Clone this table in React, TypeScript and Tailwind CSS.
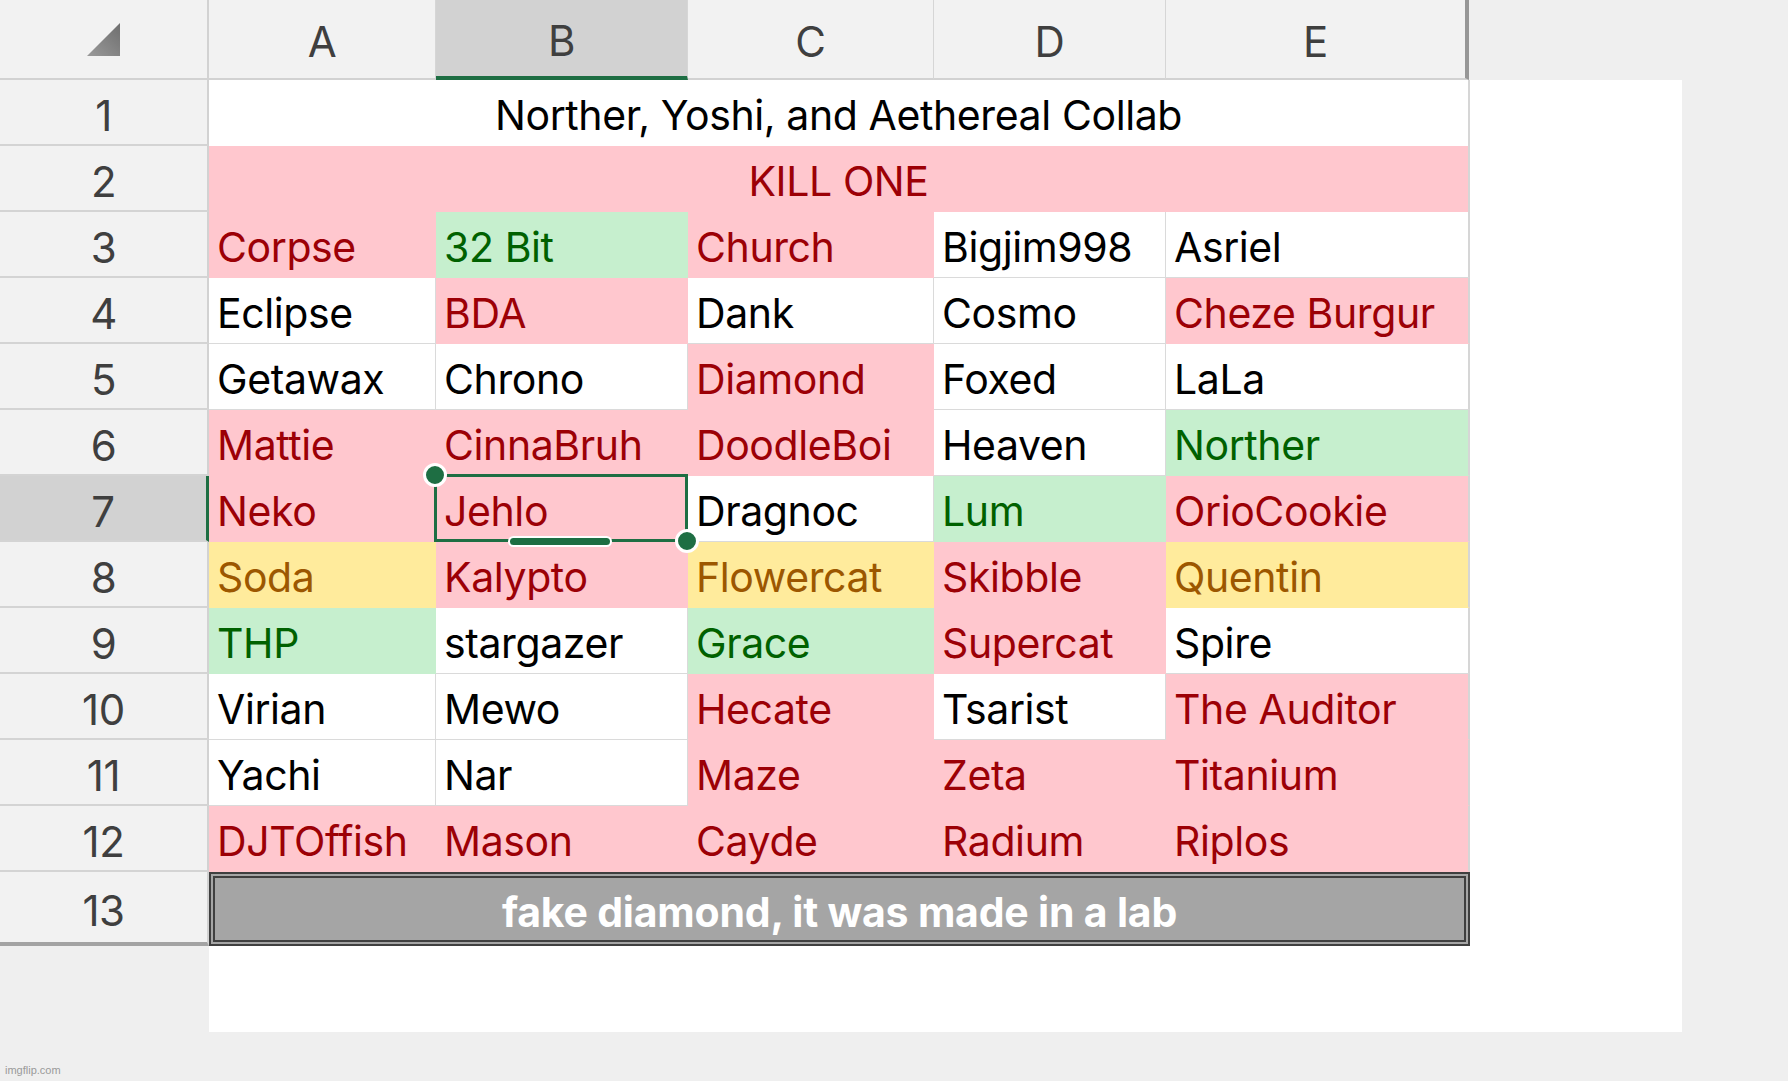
import React from "react";

type Kind = "w" | "r" | "g" | "y";

const rows: [string, Kind][][] = [
  [["Corpse", "r"], ["32 Bit", "g"], ["Church", "r"], ["Bigjim998", "w"], ["Asriel", "w"]],
  [["Eclipse", "w"], ["BDA", "r"], ["Dank", "w"], ["Cosmo", "w"], ["Cheze Burgur", "r"]],
  [["Getawax", "w"], ["Chrono", "w"], ["Diamond", "r"], ["Foxed", "w"], ["LaLa", "w"]],
  [["Mattie", "r"], ["CinnaBruh", "r"], ["DoodleBoi", "r"], ["Heaven", "w"], ["Norther", "g"]],
  [["Neko", "r"], ["Jehlo", "r"], ["Dragnoc", "w"], ["Lum", "g"], ["OrioCookie", "r"]],
  [["Soda", "y"], ["Kalypto", "r"], ["Flowercat", "y"], ["Skibble", "r"], ["Quentin", "y"]],
  [["THP", "g"], ["stargazer", "w"], ["Grace", "g"], ["Supercat", "r"], ["Spire", "w"]],
  [["Virian", "w"], ["Mewo", "w"], ["Hecate", "r"], ["Tsarist", "w"], ["The Auditor", "r"]],
  [["Yachi", "w"], ["Nar", "w"], ["Maze", "r"], ["Zeta", "r"], ["Titanium", "r"]],
  [["DJTOffish", "r"], ["Mason", "r"], ["Cayde", "r"], ["Radium", "r"], ["Riplos", "r"]],
];

const kindClass: Record<Kind, string> = {
  w: "bg-white text-black border-r border-b border-[#dadada]",
  r: "bg-[#ffc7ce] text-[#9c0006] border-r border-b border-[#ffc7ce]",
  g: "bg-[#c6efce] text-[#006100] border-r border-b border-[#c6efce]",
  y: "bg-[#ffeb9c] text-[#9c5700] border-r border-b border-[#ffeb9c]",
};

const colHeaders = [
  { l: "A", w: "w-[227px]" },
  { l: "B", w: "w-[252px]" },
  { l: "C", w: "w-[246px]" },
  { l: "D", w: "w-[232px]" },
  { l: "E", w: "w-[303px]" },
];

function Selection() {
  return (
    <div className="absolute z-20 -left-[2px] -top-[2px] -right-[1px] -bottom-[1px] pointer-events-none">
      <div className="absolute inset-0 border-[3px] border-[#1e6e43]" />
      <div className="absolute -left-[11px] -top-[11px] w-[24px] h-[24px] rounded-full bg-[#1e6e43] border-[3px] border-white" />
      <div className="absolute -right-[11px] -bottom-[11px] w-[24px] h-[24px] rounded-full bg-[#1e6e43] border-[3px] border-white" />
      <div className="absolute left-[74px] -bottom-[5px] w-[104px] h-[11px] rounded-full bg-[#1e6e43] border-2 border-white" />
    </div>
  );
}

export default function App() {
  return (
    <div className="relative w-[1788px] h-[1081px] bg-[#efefef] overflow-hidden flex flex-col [font-family:Inter,'Noto_Sans',sans-serif] tracking-[-0.4px]">
      {/* Column header row */}
      <div className="flex h-[80px]">
        <div className="w-[209px] h-full bg-[#f2f2f2] border-r-2 border-b-2 border-[#d2d2d2] flex justify-end items-end pr-[86px] pb-[21px]">
          <svg width="34" height="34" viewBox="0 0 34 34">
            <defs>
              <linearGradient id="tri" x1="0" y1="1" x2="1" y2="0">
                <stop offset="0" stopColor="#9a9a9a" />
                <stop offset="1" stopColor="#6e6e6e" />
              </linearGradient>
            </defs>
            <polygon points="33,0 33,33 0,33" fill="url(#tri)" />
          </svg>
        </div>
        {colHeaders.map((c, i) => (
          <div
            key={c.l}
            className={`${c.w} h-full flex items-center justify-center pt-[4px] text-[42px] text-[#3f3f3f] ${
              c.l === "B"
                ? "bg-[#d2d2d2] border-b-[4px] border-b-[#1e6e43]"
                : "bg-[#f2f2f2] border-b-2 border-b-[#d2d2d2]"
            } ${i === 4 ? "border-r-[4px] border-r-[#979797]" : "border-r border-r-[#d6d6d6]"}`}
          >
            {c.l}
          </div>
        ))}
        <div className="flex-1" />
      </div>

      <div className="flex">
        {/* Row headers */}
        <div className="w-[209px] flex flex-col">
          {Array.from({ length: 13 }, (_, i) => i + 1).map((n) => (
            <div
              key={n}
              className={`flex items-center justify-center pt-[6px] text-[42px] text-[#3f3f3f] border-b-2 ${
                n === 13 ? "h-[74px] border-b-[4px] border-b-[#a3a3a3]" : "h-[66px] border-b-[#d4d4d4]"
              } ${
                n === 7
                  ? "bg-[#d2d2d2] border-r-[3px] border-r-[#1e6e43]"
                  : "bg-[#f2f2f2] border-r-2 border-r-[#d2d2d2]"
              }`}
            >
              {n}
            </div>
          ))}
        </div>

        {/* Sheet body */}
        <div className="w-[1473px] h-[952px] bg-white">
          <div className="w-[1261px] grid grid-cols-[227px_252px_246px_232px_304px]">
            <div className="col-span-5 h-[66px] bg-white border-r-2 border-[#d6d6d6] flex items-center justify-center pt-[6px] text-[41px] text-black">
              Norther, Yoshi, and Aethereal Collab
            </div>
            <div className="col-span-5 h-[66px] bg-[#ffc7ce] border-r-2 border-[#d6d6d6] flex items-center justify-center pt-[6px] text-[41px] text-[#9c0006]">
              KILL ONE
            </div>
            {rows.map((row, ri) =>
              row.map(([text, kind], ci) => (
                <div
                  key={`${ri}-${ci}`}
                  className={`relative h-[66px] flex items-center pl-[8px] pt-[6px] text-[41px] whitespace-nowrap ${kindClass[kind]} ${
                    ci === 4 ? "border-r-2 border-r-[#d6d6d6]" : ""
                  }`}
                >
                  {text}
                  {ri === 4 && ci === 1 ? <Selection /> : null}
                </div>
              ))
            )}
            <div className="col-span-5 h-[74px] bg-[#a5a5a5] border-[6px] border-double border-[#3f3f3f] flex items-center justify-center pt-[8px] text-[41px] font-bold tracking-[-0.2px] text-white">
              fake diamond, it was made in a lab
            </div>
          </div>
        </div>
      </div>

      <div className="absolute left-[5px] bottom-[3px] text-[11px] tracking-normal text-[#9a9a9a] [font-family:'Liberation_Sans',sans-serif]">
        imgflip.com
      </div>
    </div>
  );
}
